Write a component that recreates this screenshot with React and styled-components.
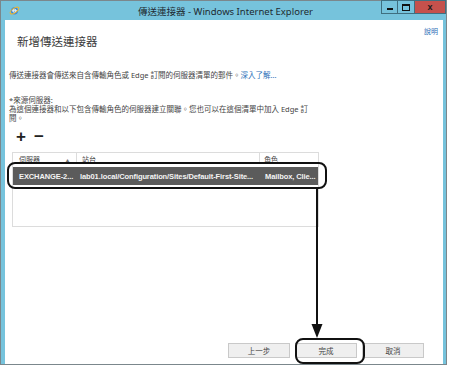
import styled, { createGlobalStyle } from 'styled-components';

const GlobalStyle = createGlobalStyle`
  html, body { margin: 0; padding: 0; background: #fff; }
  body {
    width: 450px;
    height: 367px;
    overflow: hidden;
    font-family: "Noto Sans", "Noto Sans CJK TC", sans-serif;
  }
`;

const Stage = styled.div`
  position: relative;
  width: 450px;
  height: 367px;
`;

const Window = styled.div`
  width: 447px;
  height: 365px;
  box-sizing: border-box;
  border: 1px solid #7b878c;
  background: #76c3dc;
  padding: 0 3px 0 4px;
  display: flex;
  flex-direction: column;
`;

const TitleBar = styled.div`
  height: 19px;
  flex: none;
  display: grid;
  grid-template-columns: 1fr auto 1fr;
  align-items: center;
  margin: 0 -3px 0 0;
`;

const TitleText = styled.div`
  font-family: "Noto Sans", "Noto Sans CJK TC", sans-serif;
  font-size: 9.5px;
  color: #1e2a30;
`;

const Controls = styled.div`
  justify-self: end;
  align-self: start;
  display: flex;
  margin-top: -1px;
`;

const CtrlButton = styled.div`
  width: ${p => p.$w}px;
  height: 14px;
  box-sizing: border-box;
  border: 1px solid #3f6f80;
  border-left: ${p => (p.$first ? '1px solid #3f6f80' : 'none')};
  background: ${p => (p.$close ? '#c5514c' : '#76c3dc')};
  display: flex;
  align-items: center;
  justify-content: center;
  font-family: "Liberation Sans", sans-serif;
  font-size: 9px;
  font-weight: bold;
  color: #1b1b1b;
`;

const MinGlyph = styled.div`
  width: 6px;
  height: 2px;
  background: #111;
  margin-top: 4px;
`;

const MaxGlyph = styled.div`
  width: 6px;
  height: 4px;
  border: 1px solid #111;
  border-top-width: 2px;
`;

const Content = styled.div`
  flex: 1;
  background: #fff;
  display: flex;
  flex-direction: column;
  padding: 0 5px 6px 4px;
`;

const Header = styled.div`
  display: flex;
  justify-content: space-between;
  align-items: flex-start;
  padding-top: 7px;
`;

const Heading = styled.div`
  margin: 6px 0 1px 8px;
  font-size: 11.5px;
  line-height: 16px;
  color: #3a3a3a;
  font-family: "Noto Sans CJK TC", sans-serif;
`;

const HelpLink = styled.a`
  font-size: 7px;
  line-height: 10px;
  color: #2d6fb8;
  text-decoration: none;
`;

const Text = styled.div`
  font-size: 7.5px;
  line-height: 9px;
  color: #444;
  margin-top: ${p => p.$mt || 0}px;
  width: ${p => p.$w || 'auto'};
`;

const Link = styled.span`
  color: #2d6fb8;
`;

const Tools = styled.div`
  display: flex;
  gap: 8px;
  margin: 6px 0 0 7px;
  font-family: "Liberation Sans", sans-serif;
  font-size: 17px;
  line-height: 15px;
  font-weight: bold;
  color: #222;
`;

const Table = styled.div`
  margin: 8px 0 0 3px;
  width: 307px;
  height: 75px;
  box-sizing: border-box;
  border: 1px solid #dcdcdc;
  display: flex;
  flex-direction: column;
`;

const Row = styled.div`
  display: grid;
  grid-template-columns: 64px 183px 1fr;
  height: ${p => p.$h}px;
  align-items: center;
  background: ${p => (p.$selected ? '#5b5b5b' : 'transparent')};
  color: ${p => (p.$selected ? '#f4f4f4' : '#444')};
  font-family: ${p => (p.$selected ? '"Liberation Sans", sans-serif' : 'inherit')};
  font-weight: ${p => (p.$selected ? 'bold' : 'normal')};
  font-size: ${p => (p.$selected ? 7.5 : 7)}px;
  letter-spacing: ${p => (p.$selected ? '-0.1px' : 'normal')};
  margin-top: ${p => p.$mt || 0}px;
`;

const Cell = styled.div`
  position: relative;
  height: 100%;
  display: flex;
  align-items: center;
  padding-left: ${p => p.$pl || 6}px;
  white-space: nowrap;
  overflow: hidden;
  border-right: ${p => (p.$sep ? '1px solid #dcdcdc' : 'none')};
`;

const SortArrow = styled.span`
  position: absolute;
  right: 6px;
  top: 4px;
  font-size: 5px;
  color: #777;
`;

const Spacer = styled.div`
  flex: 1;
`;

const Footer = styled.div`
  display: flex;
  justify-content: flex-end;
  gap: 5px;
  padding-right: 14px;
`;

const Button = styled.div`
  width: 62px;
  height: 15px;
  box-sizing: border-box;
  border: 1px solid #c9c9c9;
  background: #efefef;
  display: flex;
  align-items: center;
  justify-content: center;
  font-size: 7.5px;
  color: #444;
`;

const Annotations = styled.svg`
  position: absolute;
  left: 0;
  top: 0;
  pointer-events: none;
`;

const IeIcon = () => (
  <svg width="11" height="11" viewBox="0 0 11 11" style={{ marginLeft: 4 }}>
    <circle cx="5.5" cy="5.8" r="3.6" fill="#3d8ad6" />
    <path d="M3.4 5.8h4.2" stroke="#fff" strokeWidth="1" />
    <circle cx="5.5" cy="5.8" r="1.6" fill="none" stroke="#fff" strokeWidth="0.9" />
    <ellipse cx="5.5" cy="5.5" rx="5" ry="2.2" fill="none" stroke="#f0b429" strokeWidth="1" transform="rotate(-35 5.5 5.5)" />
  </svg>
);

const App = () => (
  <Stage>
    <GlobalStyle />
    <Window>
      <TitleBar>
        <IeIcon />
        <TitleText>傳送連接器 - Windows Internet Explorer</TitleText>
        <Controls>
          <CtrlButton $w={17} $first><MinGlyph /></CtrlButton>
          <CtrlButton $w={17}><MaxGlyph /></CtrlButton>
          <CtrlButton $w={31} $close>x</CtrlButton>
        </Controls>
      </TitleBar>
      <Content>
        <Header>
          <Heading>新增傳送連接器</Heading>
          <HelpLink>說明</HelpLink>
        </Header>
        <Text $mt={21}>
          傳送連接器會傳送來自含傳輸角色或 Edge 訂閱的伺服器清單的郵件。<Link>深入了解...</Link>
        </Text>
        <Text $mt={16}>*來源伺服器:</Text>
        <Text $w="312px">
          為這個連接器和以下包含傳輸角色的伺服器建立關聯。您也可以在這個清單中加入 Edge 訂閱。
        </Text>
        <Tools>
          <span>+</span>
          <span>−</span>
        </Tools>
        <Table>
          <Row $h={11}>
            <Cell $sep>伺服器<SortArrow>▲</SortArrow></Cell>
            <Cell $sep $pl={5}>站台</Cell>
            <Cell $pl={4}>角色</Cell>
          </Row>
          <Row $h={18} $selected $mt={3}>
            <Cell>EXCHANGE-2...</Cell>
            <Cell $pl={3}>lab01.local/Configuration/Sites/Default-First-Site...</Cell>
            <Cell $pl={5}>Mailbox, Clie...</Cell>
          </Row>
        </Table>
        <Spacer />
        <Footer>
          <Button>上一步</Button>
          <Button>完成</Button>
          <Button>取消</Button>
        </Footer>
      </Content>
    </Window>
    <Annotations width="450" height="367">
      <rect x="8" y="163" width="318" height="25" rx="7" fill="none" stroke="#111" strokeWidth="2" />
      <line x1="317" y1="188" x2="317" y2="326" stroke="#111" strokeWidth="2" />
      <polygon points="311.5,324 322.5,324 317,338" fill="#111" />
      <rect x="296" y="339" width="68" height="24" rx="7" fill="none" stroke="#111" strokeWidth="2" />
    </Annotations>
  </Stage>
);

export default App;
